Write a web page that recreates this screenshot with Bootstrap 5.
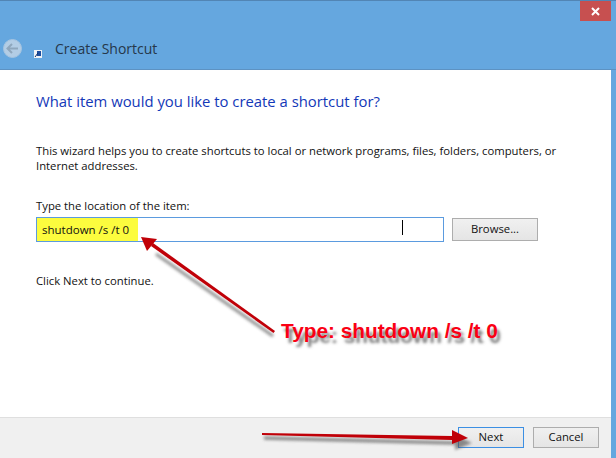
<!DOCTYPE html>
<html lang="en"><head><meta charset="utf-8"><title>Create Shortcut</title>
<link href="https://cdn.jsdelivr.net/npm/bootstrap@5.3.0/dist/css/bootstrap.min.css" rel="stylesheet">
<style>
html,body{width:616px;height:458px;overflow:hidden;margin:0;background:#fff}
body{font-family:"Open Sans","Noto Sans",sans-serif;font-size:11.3px;color:#111}
.win{width:616px;height:458px;position:relative;display:flex;flex-direction:column;border-right:5px solid #65a7df}
.titlebar{height:70px;flex:none;background:#65a7df;border-top:1px solid #5285b4;border-bottom:1px solid #5d92c2;margin-right:-5px;display:flex;align-items:flex-end;padding:0 0 11px 3px}
.backbtn{width:19px;height:19px;border-radius:50%;background:#b3cde5;border:1px solid #a5c4e0;display:flex;align-items:center;justify-content:center;flex:none}
.appico{margin:0 0 0 12px;flex:none;align-self:flex-end}
.wintitle{font-size:14px;color:#26374a;margin-left:13px;line-height:19px}
.closebtn{position:absolute;top:1px;right:0;width:31px;height:20px;background:#c75050;display:flex;align-items:center;justify-content:center}
.wizard{flex:1;padding:21px 0 0 36px;background:#fff;min-height:0}
.wizhead{font-size:14.85px;color:#1338b8;line-height:20px;margin:0 0 32px;font-weight:400}
.intro{line-height:15px;width:540px;margin:0 0 25px}
.lbl{line-height:15px;margin-bottom:4px}
.locrow{display:flex;gap:8px;align-items:center}
.locbox{width:408px;height:25px;border:1px solid #5b9bdf;display:flex;align-items:stretch;position:relative;background:#fff}
.hilite{background:#fcfc3e;width:101px;padding-left:5px;line-height:23px;color:#111;font-size:11.5px}
.caret-bar{position:absolute;left:365px;top:2px;width:1px;height:15px;background:#000}
.winbtn{border:1px solid #adadad;background:linear-gradient(#f0f0f0,#e5e5e5);color:#111;font-size:11.3px;height:23px;padding:0;display:flex;align-items:center;justify-content:center;border-radius:0}
.w-browse{width:86px}
.w-foot{width:66px;height:21px}
.cont{margin-top:31px;line-height:15px}
.footbar{height:41px;flex:none;background:#f0f0f0;border-top:1px solid #dfdfdf;display:flex;justify-content:flex-end;gap:9px;padding:9px 12px 0 0}
.nextbtn{border-color:#3c8fe3}
.overlay{position:absolute;left:0;top:0;width:616px;height:458px;pointer-events:none}
.callout{position:absolute;left:281px;top:319px;font-family:"Liberation Sans",Arial,sans-serif;font-weight:700;font-size:20.8px;line-height:24px;color:#fa0014;white-space:nowrap;text-shadow:3px 5px 3px rgba(70,70,70,.7)}
</style></head><body>
<div class="win">
  <div class="titlebar">
    <span class="backbtn"><svg width="13" height="11" viewBox="0 0 13 11"><path d="M6 1 1.500 5.500 6 10M2 5.500H12" fill="none" stroke="#8fa7bd" stroke-width="2"/></svg></span>
    <svg class="appico" width="8" height="8" viewBox="0 0 8 8"><rect width="8" height="8" fill="#eef2f6"/><rect x="3" y="1" width="4" height="5" fill="#1d4e9e"/><path d="M1 7 4 3" stroke="#0d2d66" stroke-width="1"/></svg>
    <span class="wintitle">Create Shortcut</span>
  </div>
  <div class="closebtn"><svg width="9" height="9" viewBox="0 0 9 9"><path d="M1 1 8 8M8 1 1 8" stroke="#fff" stroke-width="2"/></svg></div>
  <div class="wizard">
    <h1 class="wizhead">What item would you like to create a shortcut for?</h1>
    <p class="intro">This wizard helps you to create shortcuts to local or network programs, files, folders, computers, or Internet addresses.</p>
    <div class="lbl">Type the location of the item:</div>
    <div class="locrow">
      <div class="locbox"><span class="hilite">shutdown /s /t 0</span><span class="caret-bar"></span></div>
      <button type="button" class="btn winbtn w-browse">Browse...</button>
    </div>
    <div class="cont">Click Next to continue.</div>
  </div>
  <div class="footbar">
    <button type="button" class="btn winbtn w-foot nextbtn">Next</button>
    <button type="button" class="btn winbtn w-foot">Cancel</button>
  </div>
</div>
<svg class="overlay" viewBox="0 0 616 458">
  <defs><filter id="sh" x="-20%" y="-60%" width="140%" height="220%"><feGaussianBlur stdDeviation="1.600"/></filter></defs>
  <g filter="url(#sh)" fill="#555" stroke="#555" opacity=".65">
    <path d="M273 336 156 254" stroke-width="3" fill="none"/>
    <path d="M264 438 455 443" stroke-width="3.500" fill="none"/>
    <path d="M455 435 472 443 455 450Z" stroke="none"/>
  </g>
  <g fill="#c00008" stroke="none">
    <path d="M273.500 333 151 246 153 243 275 331Z"/>
    <path d="M141 237 157 239 152 245 147 251Z"/>
    <path d="M262 433 452 436 452 440 262 435Z"/>
    <path d="M452 430 468 438 452 444Z"/>
  </g>
</svg>
<div class="callout">Type: shutdown /s /t 0</div>
<script src="https://cdn.jsdelivr.net/npm/bootstrap@5.3.0/dist/js/bootstrap.bundle.min.js"></script>
</body></html>
